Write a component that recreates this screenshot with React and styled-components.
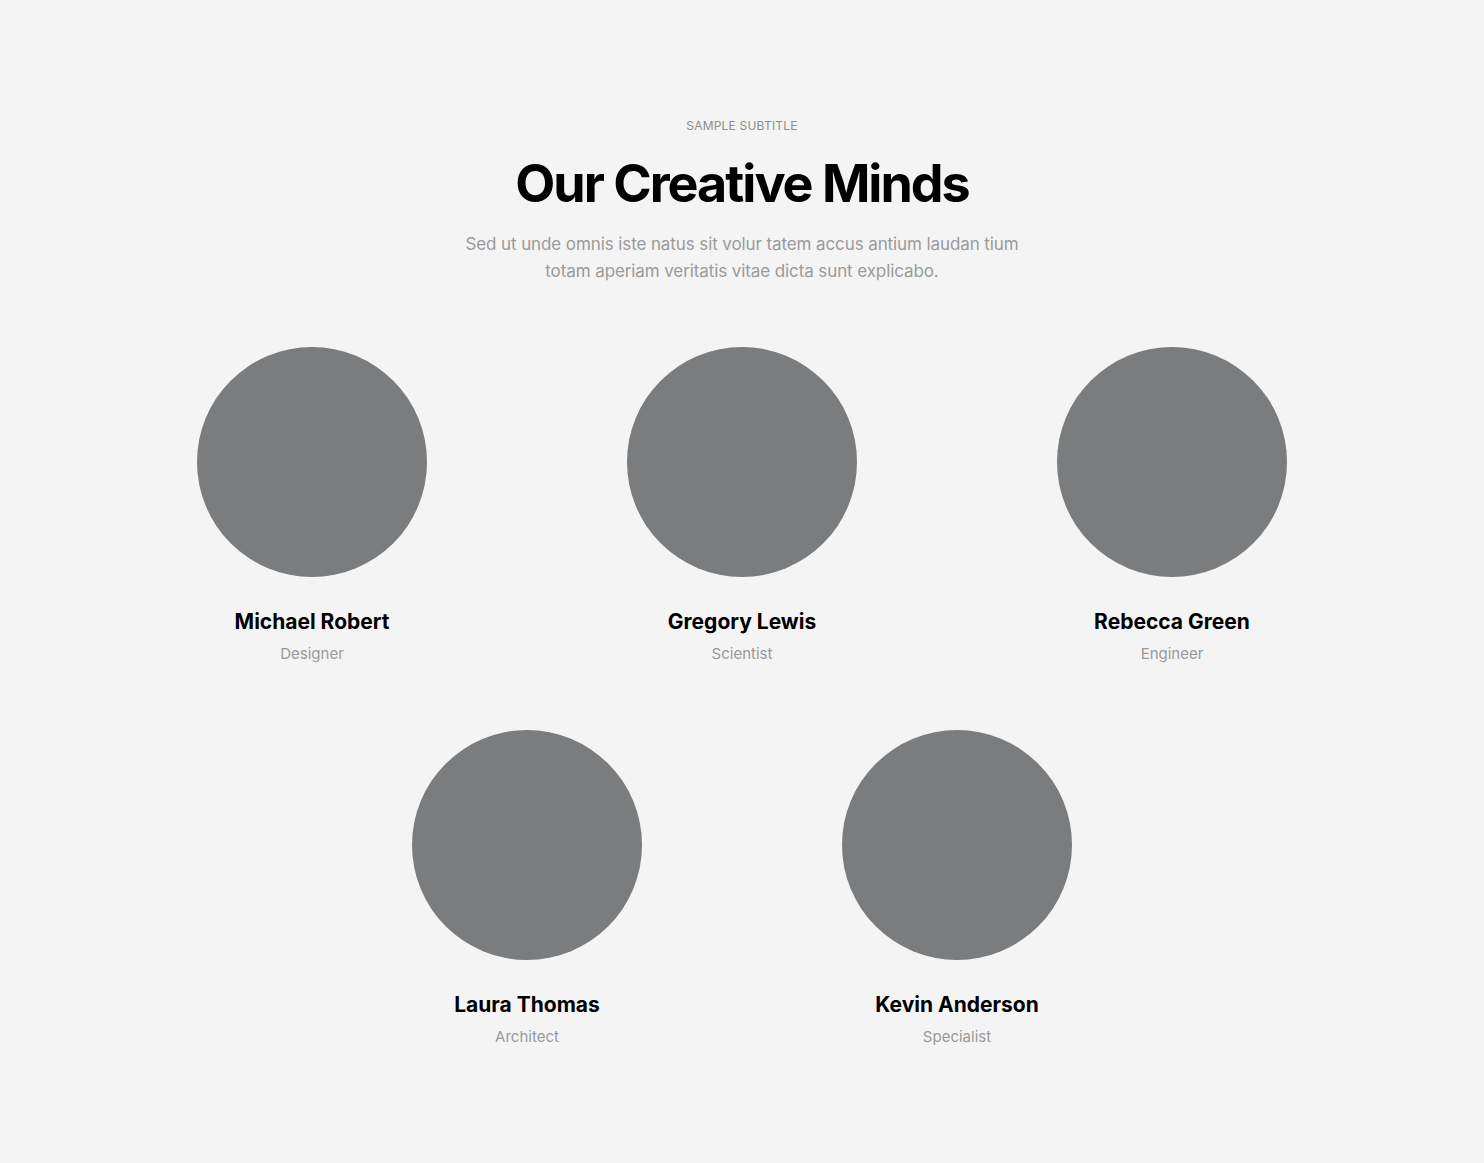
import React from 'react'
import styled, { createGlobalStyle } from 'styled-components'

const GlobalStyle = createGlobalStyle`
  html, body {
    margin: 0;
    padding: 0;
    background: #f4f4f4;
  }
  body {
    font-family: Inter, "Noto Sans", sans-serif;
    -webkit-font-smoothing: antialiased;
  }
`

const team = [
    [
        { name: 'Michael Robert', role: 'Designer' },
        { name: 'Gregory Lewis', role: 'Scientist' },
        { name: 'Rebecca Green', role: 'Engineer' },
    ],
    [
        { name: 'Laura Thomas', role: 'Architect' },
        { name: 'Kevin Anderson', role: 'Specialist' },
    ],
]

function App() {
    return (
        <>
            <GlobalStyle />
            <Section>
                <Header>
                    <Subtitle>Sample Subtitle</Subtitle>
                    <Title>Our Creative Minds</Title>
                    <Lead>
                        Sed ut unde omnis iste natus sit volur tatem accus antium laudan tium
                        totam aperiam veritatis vitae dicta sunt explicabo.
                    </Lead>
                </Header>
                <Grid>
                    {team.map((row, i) => (
                        <Row key={i}>
                            {row.map((member) => (
                                <Member key={member.name}>
                                    <Avatar />
                                    <Name>{member.name}</Name>
                                    <Role>{member.role}</Role>
                                </Member>
                            ))}
                        </Row>
                    ))}
                </Grid>
            </Section>
        </>
    )
}

const Section = styled.section`
    min-height: 1163px;
    box-sizing: border-box;
    padding: 117px 0 0;
    display: flex;
    flex-direction: column;
    align-items: center;
`

const Header = styled.div`
    display: flex;
    flex-direction: column;
    align-items: center;
    text-align: center;
`

const Subtitle = styled.div`
    font-size: 12px;
    line-height: 18px;
    text-transform: uppercase;
    color: #8c8c8c;
    letter-spacing: 0.2px;
`

const Title = styled.h2`
    margin: 17px 0 0;
    font-size: 52px;
    line-height: 64px;
    font-weight: 700;
    letter-spacing: -2px;
    color: #000;
`

const Lead = styled.p`
    margin: 15px 0 0;
    max-width: 580px;
    font-size: 17px;
    line-height: 27px;
    color: #9a9a9a;
    letter-spacing: -0.1px;
`

const Grid = styled.div`
    margin-top: 62px;
    width: 1290px;
    display: flex;
    flex-direction: column;
    gap: 66px;
`

const Row = styled.div`
    display: flex;
    justify-content: center;
`

const Member = styled.div`
    width: 430px;
    display: flex;
    flex-direction: column;
    align-items: center;
`

const Avatar = styled.div`
    width: 230px;
    height: 230px;
    border-radius: 50%;
    background: #7b7c7d;
`

const Name = styled.h3`
    margin: 31px 0 0;
    font-size: 21px;
    line-height: 28px;
    font-weight: 700;
    letter-spacing: 0;
    color: #000;
`

const Role = styled.div`
    margin-top: 8px;
    font-size: 15px;
    line-height: 20px;
    color: #999;
    letter-spacing: 0;
`

export default App
